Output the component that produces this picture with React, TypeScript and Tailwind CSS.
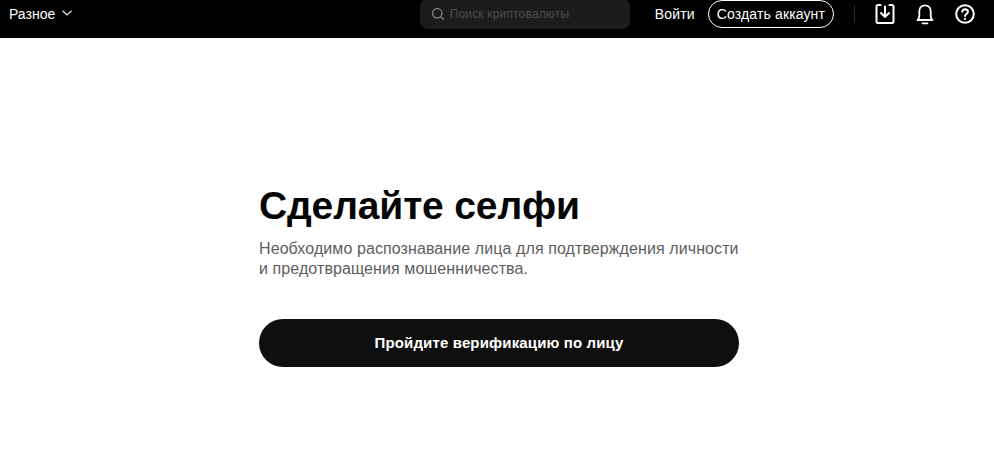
const App = () => {
  return (
    <div className="h-[466px] bg-white font-['Liberation_Sans',sans-serif] overflow-hidden">
      <header className="flex h-[38px] items-center bg-black pb-[10px] pl-[9px] pr-[19px] text-white">
        <button className="flex items-center gap-[6px] text-[14px]">
          Разное
          <svg width="12" height="12" viewBox="0 0 12 12" fill="none" stroke="#e5e5e5" strokeWidth="1.2" className="mb-[3px]">
            <path d="M1.5 3.8 6 8l4.5-4.2" />
          </svg>
        </button>
        <div className="ml-auto flex h-[30px] w-[210px] items-center gap-[5px] rounded-[8px] bg-[#1c1c1c] pl-[11px] text-[12px] tracking-[0.17px] text-[#4d4d4d]">
          <svg width="14" height="14" viewBox="0 0 14 14" fill="none" stroke="#808080" strokeWidth="1.3">
            <circle cx="6.2" cy="6.2" r="4.7" />
            <path d="m9.8 9.8 3 3" />
          </svg>
          Поиск криптовалюты
        </div>
        <span className="ml-[25px] text-[14px] tracking-[0.2px]">Войти</span>
        <button className="ml-[13px] h-[28px] rounded-full border border-white px-[8px] text-[14px] tracking-[0.13px] whitespace-nowrap">
          Создать аккаунт
        </button>
        <div className="ml-[20px] h-[18px] w-px bg-[#2b2b2b]" />
        <div className="ml-[20px] flex items-center gap-[20px]">
          <svg width="20" height="22" viewBox="0 0 20 22" fill="none" stroke="#fff" strokeWidth="2" strokeLinecap="round" strokeLinejoin="round">
            <path d="M5.5 2H3a1.5 1.5 0 0 0-1.5 1.5v15A1.5 1.5 0 0 0 3 20h14a1.5 1.5 0 0 0 1.5-1.5v-15A1.5 1.5 0 0 0 17 2h-2.500" />
            <path d="M10 3.500V14M6 10l4 4 4-4" />
          </svg>
          <svg width="20" height="22" viewBox="0 0 20 22" fill="none" stroke="#fff" strokeWidth="1.8" strokeLinecap="round" strokeLinejoin="round">
            <path d="M2.500 17c1.200-1 1.800-2 1.800-4V8a5.700 5.700 0 0 1 11.400 0v5c0 2 .6 3 1.800 4Z" />
            <path d="M7.500 20.300h5" />
          </svg>
          <svg width="20" height="20" viewBox="0 0 20 20" fill="none" stroke="#fff" strokeWidth="2" strokeLinecap="round">
            <circle cx="10" cy="10" r="8.800" />
            <path d="M7.200 7.700A2.900 2.900 0 0 1 10 5.200c1.600 0 2.900 1.100 2.900 2.600 0 2.100-2.900 2.300-2.900 4.300" />
            <path d="M10 14.800v.1" />
          </svg>
        </div>
      </header>
      <main className="pl-[259px] pt-[145px]">
        <div className="w-[480px]">
          <h1 className="text-[39px] leading-[46px] font-bold tracking-[-0.15px] text-[#050505]">Сделайте селфи</h1>
          <p className="mt-[10px] text-[16px] leading-[20px] tracking-[0.09px] text-[#5e5e5e]">
            Необходимо распознавание лица для подтверждения личности
            <br />
            и предотвращения мошенничества.
          </p>
          <button className="mt-[40px] h-[48px] w-full rounded-full bg-[#0f0f0f] text-[15px] font-bold tracking-[0.14px] text-white">
            Пройдите верификацию по лицу
          </button>
        </div>
      </main>
    </div>
  );
};

export default App;
